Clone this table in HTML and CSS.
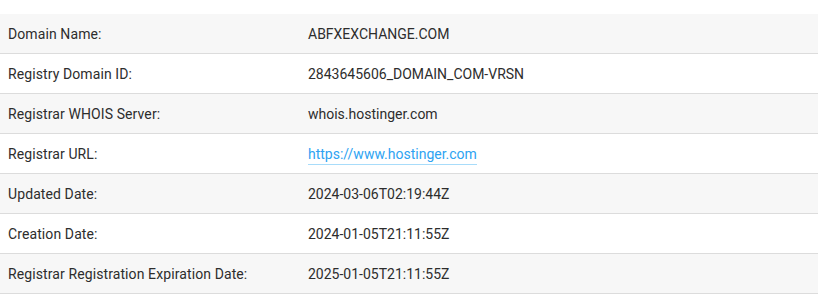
FILE: index.html
```html
<!DOCTYPE html>
<html>
<head>
<meta charset="utf-8">
<link rel="stylesheet" href="styles.css">
</head>
<body>
<table class="whois">
  <tbody>
    <tr><td class="label">Domain Name:</td><td class="value">ABFXEXCHANGE.COM</td></tr>
    <tr><td class="label">Registry Domain ID:</td><td class="value">2843645606_DOMAIN_COM-VRSN</td></tr>
    <tr><td class="label">Registrar WHOIS Server:</td><td class="value">whois.hostinger.com</td></tr>
    <tr><td class="label">Registrar URL:</td><td class="value"><a class="link" href="#">https://www.hostinger.com</a></td></tr>
    <tr><td class="label">Updated Date:</td><td class="value">2024-03-06T02:19:44Z</td></tr>
    <tr><td class="label">Creation Date:</td><td class="value">2024-01-05T21:11:55Z</td></tr>
    <tr><td class="label">Registrar Registration Expiration Date:</td><td class="value">2025-01-05T21:11:55Z</td></tr>
  </tbody>
</table>
</body>
</html>
```
FILE: styles.css
```css
html, body {
  margin: 0;
  padding: 0;
  background: #fff;
}
body {
  padding-top: 14px;
  font-family: Roboto, "Liberation Sans", sans-serif;
  font-size: 14px;
  color: #2d2d2d;
}
.whois {
  width: 100%;
  border-collapse: separate;
  border-spacing: 0;
}
.whois td {
  height: 40px;
  padding: 0 8px;
  vertical-align: middle;
  line-height: 20px;
  border-bottom: 1px solid #dcdcdc;
  box-sizing: border-box;
}
.whois tr:nth-child(odd) td {
  background: #f7f7f7;
}
.label {
  width: 300px;
  letter-spacing: 0.1px;
}
.link {
  color: #2ea3f2;
  text-decoration: none;
  border-bottom: 1px solid #a8dcfa;
  padding-bottom: 2px;
}
```
